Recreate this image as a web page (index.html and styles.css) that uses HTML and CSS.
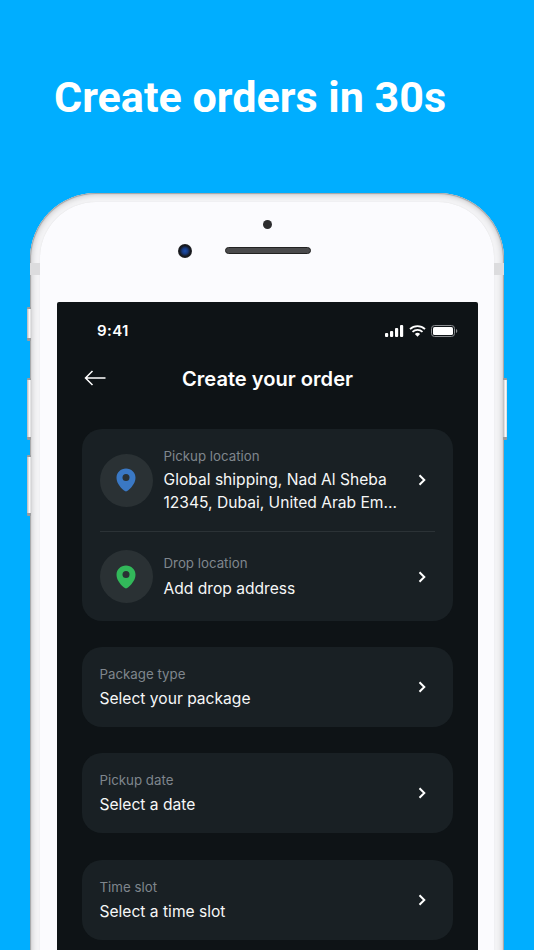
FILE: index.html
```html
<!DOCTYPE html>
<html lang="en">
<head>
<meta charset="utf-8">
<title>Create orders in 30s</title>
<link rel="stylesheet" href="styles.css">
</head>
<body>
<main class="page">
  <h1 class="headline">Create orders in 30s</h1>
  <div class="phone">
    <span class="btn btn-mute"></span>
    <span class="btn btn-up"></span>
    <span class="btn btn-down"></span>
    <span class="btn btn-power"></span>
    <span class="band band-l"></span>
    <span class="band band-r"></span>
    <div class="bezel">
      <div class="sensors">
        <span class="dot"></span>
        <span class="camera"></span>
        <span class="speaker"></span>
      </div>
      <div class="screen">
        <div class="status">
          <span class="time">9:41</span>
          <div class="status-icons">
            <svg width="19" height="12" viewBox="0 0 19 12"><rect x="0" y="8" width="3.2" height="4" rx="1" fill="#fff"/><rect x="5" y="6" width="3.2" height="6" rx="1" fill="#fff"/><rect x="10" y="3" width="3.2" height="9" rx="1" fill="#fff"/><rect x="15" y="0" width="3.2" height="12" rx="1" fill="#fff"/></svg>
            <svg width="17" height="12" viewBox="0 0 17 12"><path d="M1 4.200a10.800 10.800 0 0 1 15 0M3.500 6.800a7.200 7.200 0 0 1 10 0" fill="none" stroke="#fff" stroke-width="1.800"/><path d="M5.900 8.900a3.800 3.800 0 0 1 5.200 0L8.500 11.700z" fill="#fff"/></svg>
            <svg width="27" height="12" viewBox="0 0 27 12"><rect x=".5" y=".5" width="23" height="11" rx="3" fill="none" stroke="#8a8d90"/><rect x="2" y="2" width="20" height="8" rx="1.600" fill="#fff"/><path d="M25 4v4a2 2 0 0 0 1.300-2A2 2 0 0 0 25 4z" fill="#8a8d90"/></svg>
          </div>
        </div>
        <header class="nav">
          <svg class="back" width="22" height="16" viewBox="0 0 22 16"><path d="M21.500 8H1.500M8.500 1 1.500 8l7 7" fill="none" stroke="#fff" stroke-width="1.500"/></svg>
          <h2 class="nav-title">Create your order</h2>
        </header>
        <section class="card card-loc">
          <div class="row row-pickup">
            <span class="pin-wrap">
              <svg width="20" height="24" viewBox="0 0 20 24"><path d="M10 .5C4.700.5.500 4.500.500 9.700c0 6.300 5.600 11 7.500 12.900 1.100 1.100 2.900 1.100 4 0 1.900-1.900 7.500-6.600 7.500-12.900C19.500 4.500 15.300.5 10 .5z" fill="#3a78c4"/><circle cx="10" cy="9.500" r="3.500" fill="#2a3134"/></svg>
            </span>
            <div class="text">
              <div class="label">Pickup location</div>
              <div class="value">Global shipping, Nad Al Sheba<br>12345, Dubai, United Arab Em...</div>
            </div>
            <svg class="chev" width="8" height="12" viewBox="0 0 8 12"><path d="M1.500 1.200 6.300 6l-4.800 4.800" fill="none" stroke="#fff" stroke-width="2"/></svg>
          </div>
          <div class="rule"></div>
          <div class="row row-drop">
            <span class="pin-wrap">
              <svg width="20" height="24" viewBox="0 0 20 24"><path d="M10 .5C4.700.5.500 4.500.500 9.700c0 6.300 5.600 11 7.500 12.900 1.100 1.100 2.900 1.100 4 0 1.900-1.900 7.500-6.600 7.500-12.900C19.500 4.500 15.300.5 10 .5z" fill="#32b85a"/><circle cx="10" cy="9.500" r="3.500" fill="#2a3134"/></svg>
            </span>
            <div class="text">
              <div class="label">Drop location</div>
              <div class="value">Add drop address</div>
            </div>
            <svg class="chev" width="8" height="12" viewBox="0 0 8 12"><path d="M1.500 1.200 6.300 6l-4.800 4.800" fill="none" stroke="#fff" stroke-width="2"/></svg>
          </div>
        </section>
        <section class="card card-field">
          <div class="text"><div class="label">Package type</div><div class="value">Select your package</div></div>
          <svg class="chev" width="8" height="12" viewBox="0 0 8 12"><path d="M1.500 1.200 6.300 6l-4.800 4.800" fill="none" stroke="#fff" stroke-width="2"/></svg>
        </section>
        <section class="card card-field">
          <div class="text"><div class="label">Pickup date</div><div class="value">Select a date</div></div>
          <svg class="chev" width="8" height="12" viewBox="0 0 8 12"><path d="M1.500 1.200 6.300 6l-4.800 4.800" fill="none" stroke="#fff" stroke-width="2"/></svg>
        </section>
        <section class="card card-field">
          <div class="text"><div class="label">Time slot</div><div class="value">Select a time slot</div></div>
          <svg class="chev" width="8" height="12" viewBox="0 0 8 12"><path d="M1.500 1.200 6.300 6l-4.800 4.800" fill="none" stroke="#fff" stroke-width="2"/></svg>
        </section>
      </div>
    </div>
  </div>
</main>
</body>
</html>
```

FILE: styles.css
```css
* { box-sizing: border-box; }
html, body { margin: 0; padding: 0; }
body { width: 534px; height: 950px; overflow: hidden; background: #00aeff; font-family: "Inter", "Liberation Sans", sans-serif; color: #fff; }
.page { width: 534px; height: 950px; overflow: hidden; display: flex; flex-direction: column; padding: 70px 0 0 30px; }
.headline { margin: 0 0 67px 24px; font: 700 43.100px/56px "Roboto", "Liberation Sans", sans-serif; color: #fff; white-space: nowrap; }
.phone { position: relative; width: 474px; height: 900px; flex: none; background: #f3f3f5; border-radius: 66px 66px 0 0; padding: 9px 10px 0; box-shadow: inset 0 0 1px 1px #a2a3a5, inset 0 0 4px 3px #d4d4d6; }
.bezel { position: relative; z-index: 1; background: #fbfbfe; height: 100%; border-radius: 56px 56px 0 0; padding: 0 16px 0 17px; box-shadow: 0 0 1px #d8d8da; }
.sensors { position: relative; height: 100px; }
.dot { position: absolute; left: 206px; top: 18px; width: 9px; height: 9px; border-radius: 50%; background: #2c2c2e; }
.camera { position: absolute; left: 121px; top: 42px; width: 14px; height: 14px; border-radius: 50%; background: radial-gradient(circle, #1c4fb0 0, #173a80 28%, #15171c 55%, #3a3a3c 100%); }
.speaker { position: absolute; left: 168px; top: 45px; width: 86px; height: 7px; border-radius: 4px; background: #4a4a4c; border: 1px solid #222; }
.screen { background: #0e1316; height: 800px; border-radius: 2px 2px 0 0; padding: 0 25px; width: 421px; }
.status { height: 57px; display: flex; justify-content: space-between; align-items: center; padding: 0 20px 0 15px; margin-right: -25px; }
.time { font-size: 15px; font-weight: 600; letter-spacing: .4px; }
.status-icons { display: flex; gap: 5px; align-items: center; }
.nav { position: relative; height: 70px; display: flex; align-items: flex-start; justify-content: center; padding-top: 5px; }
.back { position: absolute; left: 2px; top: 11px; }
.nav-title { margin: 0; font-size: 20.100px; line-height: 30px; font-weight: 600; }
.card { background: #192024; border-radius: 20px; width: 371px; margin-bottom: 26.400px; }
.card-loc { height: 192px; padding: 0 18px; margin-bottom: 26px; }
.row { display: flex; align-items: center; }
.row-pickup { height: 102px; }
.row-drop { height: 89px; }
.pin-wrap { flex: none; width: 53px; height: 53px; border-radius: 50%; background: #2a3134; display: flex; align-items: center; justify-content: center; margin-right: 11px; margin-left: -.5px; }
.text { flex: 1; min-width: 0; }
.label { font-size: 13.300px; line-height: 20px; color: #7f868d; }
.value { font-size: 15.600px; line-height: 23px; font-weight: 400; color: #f6f7f7; margin-top: 4px; white-space: nowrap; }
.row-pickup .value { margin-top: 3.500px; line-height: 22.500px; }
.row-drop .value { margin-top: 3.500px; }
.card-field .text { margin-left: -.5px; }
.card-field .value { margin-top: 3px; }
.chev { flex: none; margin-right: 9px; margin-left: -1px; }
.rule { height: 1px; background: #2b3236; }
.card-field { height: 80px; padding: 0 18px; display: flex; align-items: center; }
.btn { position: absolute; z-index: 0; background: linear-gradient(90deg, #b4b5b7, #fbfbfc 60%, #d8d8da); border-radius: 1px; width: 4px; border-top: 2px solid #9a9b9d; border-bottom: 3px solid #9a9b9d; }
.btn-mute { left: -3px; top: 114px; height: 34px; }
.btn-up { left: -3px; top: 185px; height: 62px; }
.btn-down { left: -3px; top: 262px; height: 61px; }
.btn-power { right: -3px; top: 185px; height: 62px; }
.band { position: absolute; z-index: 2; top: 70px; width: 10px; height: 12px; background: #dcdcde; }
.band-l { left: 0; }
.band-r { right: 0; }
```
